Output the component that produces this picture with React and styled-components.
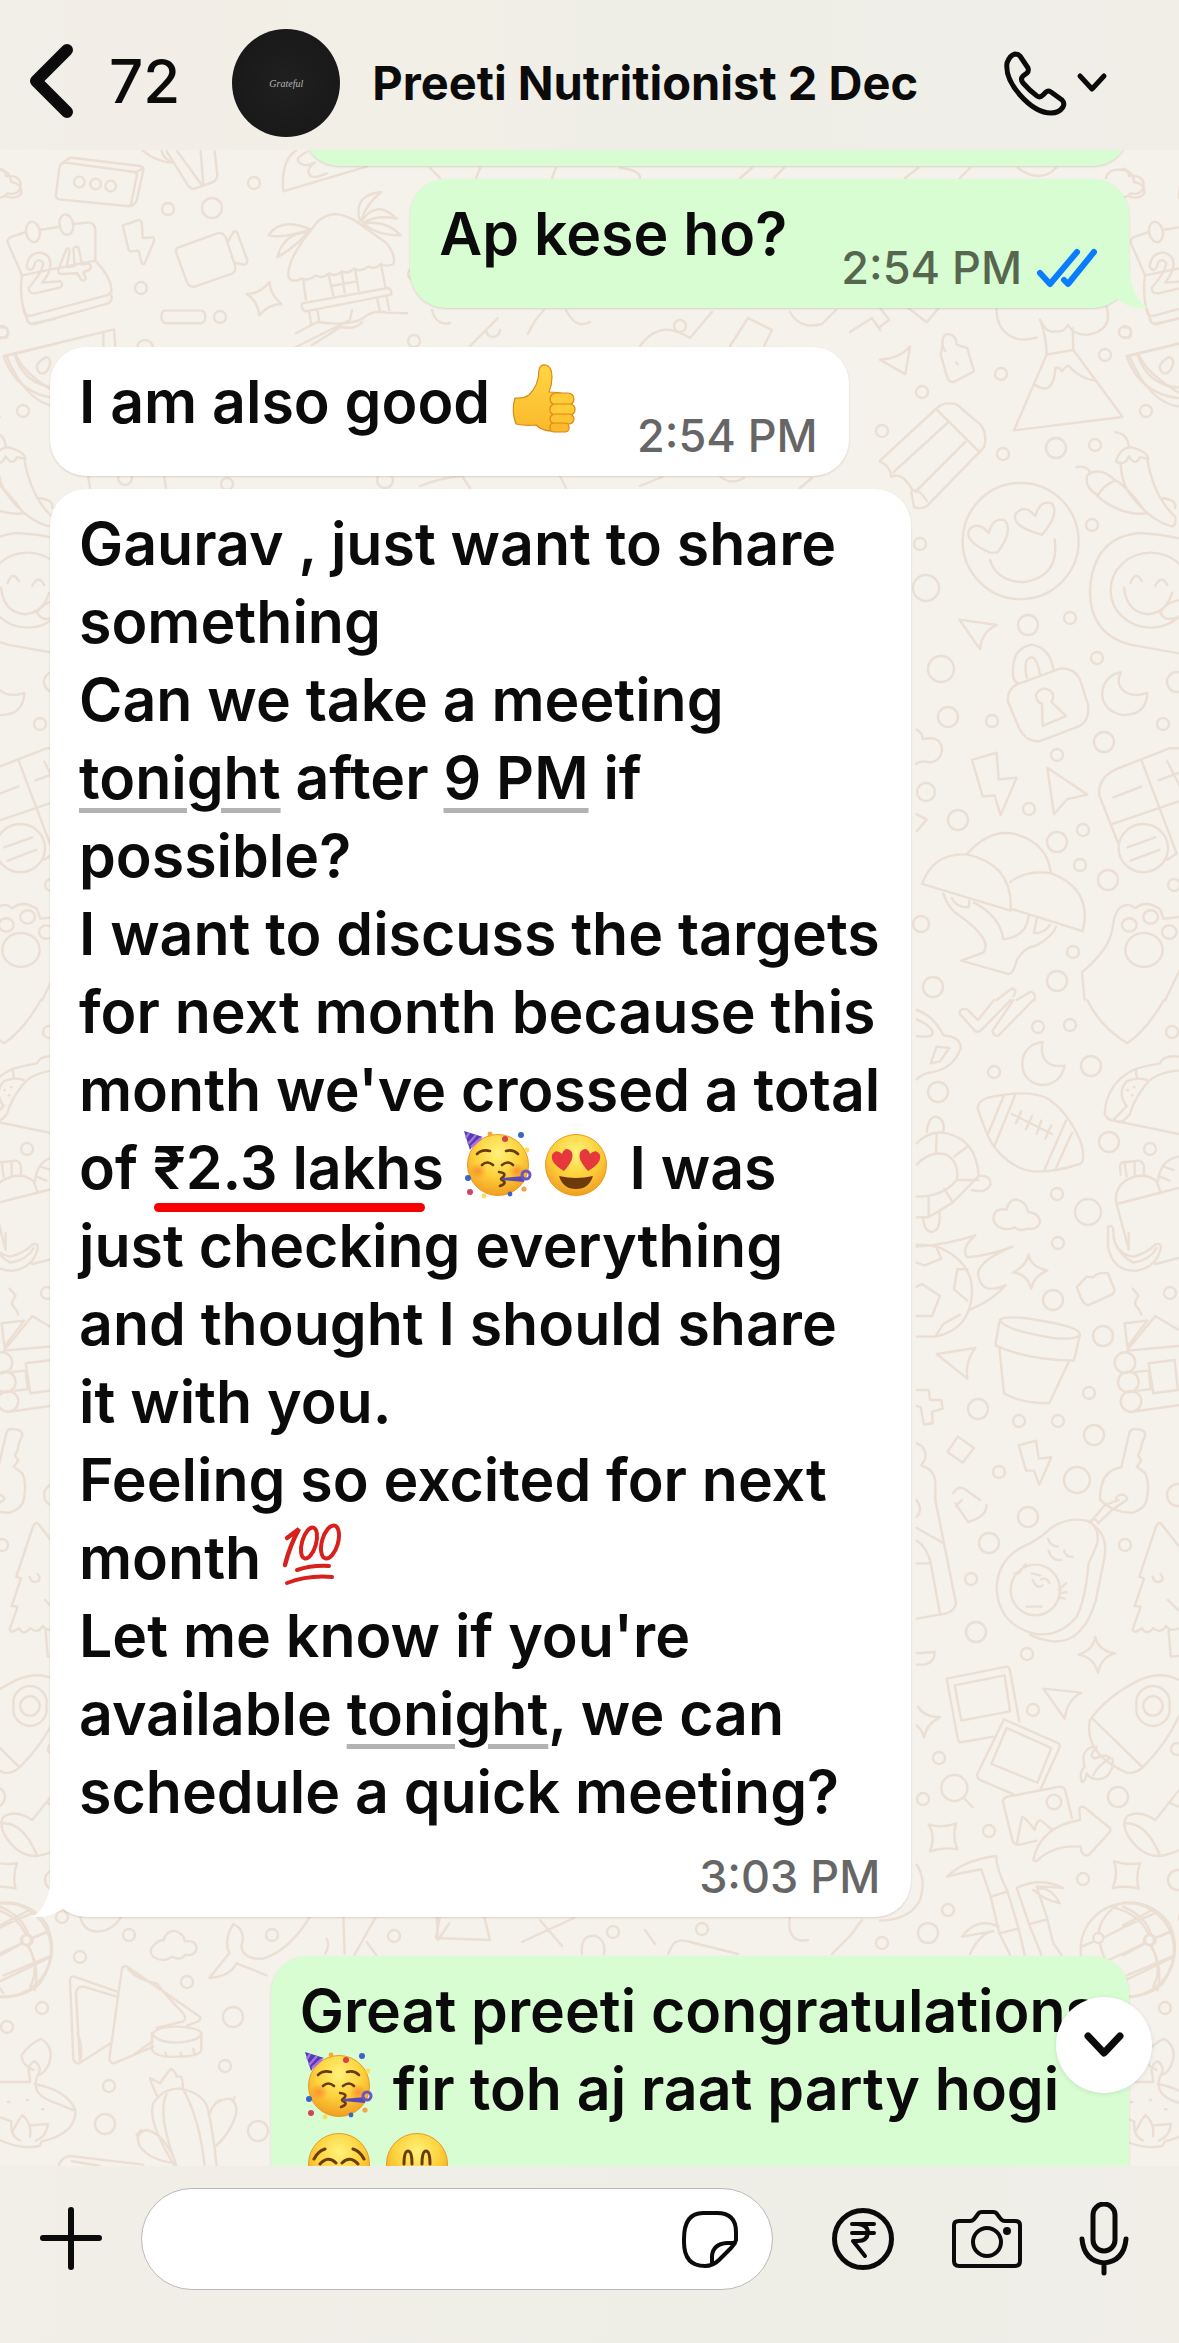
import React from "react";
import styled, { createGlobalStyle, css } from "styled-components";

const GlobalStyle = createGlobalStyle`
  * {
    box-sizing: border-box;
  }
  body {
    margin: 0;
    background: #f5f1eb;
    color: #0b0b0b;
    font-family: Inter, "Liberation Sans", sans-serif;
  }
  button {
    display: flex;
    align-items: center;
    justify-content: center;
    padding: 0;
    border: 0;
    background: none;
    color: inherit;
    font: inherit;
    cursor: pointer;
  }
  svg {
    flex: none;
  }
`;

const Screen = styled.div`
  display: flex;
  flex-direction: column;
  height: 100vh;
`;

const Header = styled.header`
  display: flex;
  align-items: center;
  flex: none;
  height: 150px;
  padding: 16px 70px 0 26px;
  background: linear-gradient(90deg, #f2eee8, #f2efe6 35%, #eeeee7 60%, #f1eee8);
`;

const BackButton = styled.button`
  && {
    gap: 33px;
    padding-bottom: 4px;
    font-size: 60px;
    font-weight: 500;
    line-height: 76px;
  }
`;

const Avatar = styled.div`
  display: flex;
  align-items: center;
  justify-content: center;
  flex: none;
  width: 108px;
  height: 108px;
  margin: 0 32px 0 52px;
  border-radius: 50%;
  background: radial-gradient(#202020, #161616);
  color: #b4b4b4;
  font: italic 10px "Liberation Serif", serif;
`;

const ContactName = styled.h1`
  flex: 1;
  margin: 0;
  font-size: 47px;
  font-weight: 700;
  line-height: 60px;
  white-space: nowrap;
`;

const CallButton = styled.button`
  && {
    gap: 6px;
  }
`;

const Chat = styled.main`
  position: relative;
  flex: 1;
  min-height: 0;
  overflow: hidden;
`;

const WallpaperSvg = styled.svg`
  position: absolute;
  top: 0;
  left: 0;
  width: 1179px;
  height: 2016px;
  fill: none;
  stroke: #ebdfd3;
  stroke-width: 2.4;
  stroke-linecap: round;
  stroke-linejoin: round;

  path,
  rect,
  circle {
    vector-effect: non-scaling-stroke;
  }
`;

const Messages = styled.div`
  position: relative;
  display: flex;
  flex-direction: column;
  margin-top: -60px;
  padding: 0 50px;
`;

const Bubble = styled.article`
  position: relative;
  display: flex;
  align-items: stretch;
  flex-direction: ${(p) => (p.$stacked ? "column" : "row")};
  gap: ${(p) => (p.$stacked ? "18px" : "54px")};
  align-self: ${(p) => (p.$mine ? "flex-end" : "flex-start")};
  margin-top: ${(p) => (p.$first ? "39px" : "13px")};
  padding: 16px 31px 12px 29px;
  border-radius: 36px;
  background: ${(p) => (p.$mine ? "#d8fdd2" : "#ffffff")};
  box-shadow: 0 1px 2px rgba(90, 70, 50, 0.18);
`;

const PreviousBubble = styled(Bubble)`
  width: 826px;
  max-width: 100%;
  height: 76px;
  margin-top: 0;
`;

const Tail = styled.svg`
  position: absolute;
  bottom: 0;
  width: 40px;
  height: 44px;
  ${(p) =>
    p.$mine
      ? css`
          right: -19px;
          fill: #d8fdd2;
        `
      : css`
          left: -18px;
          transform: scaleX(-1);
          fill: #ffffff;
        `}
`;

const Body = styled.div`
  padding-bottom: ${(p) => (p.$stacked ? "0" : "23px")};
  font-size: 59px;
  font-weight: 600;
  line-height: 78px;
  white-space: pre;
`;

const Line = styled.div`
  height: 78px;
`;

const Stamp = styled.div`
  display: flex;
  align-items: center;
  align-self: flex-end;
  gap: 14px;
  color: ${(p) => (p.$mine ? "#56664f" : "#666666")};
  font-size: 45px;
  font-weight: 500;
  line-height: 56px;
  white-space: nowrap;
`;

const DateLink = styled.a`
  color: inherit;
  text-decoration: underline #b3b3b3 5px;
  text-underline-offset: 9px;
`;

const Marked = styled.span`
  position: relative;

  &::after {
    content: "";
    position: absolute;
    left: 1px;
    right: 19px;
    bottom: -9px;
    height: 9px;
    border-radius: 5px;
    background: #f90000;
  }
`;

const EmojiSvg = styled.svg`
  width: 78px;
  height: 72px;
  vertical-align: -12px;
`;

const ScrollButton = styled.button`
  && {
    position: absolute;
    right: 27px;
    bottom: 73px;
    width: 96px;
    height: 96px;
    border-radius: 50%;
    background: #ffffff;
    box-shadow: 0 1px 5px rgba(0, 0, 0, 0.1);
  }
`;

const Composer = styled.footer`
  display: flex;
  align-items: center;
  flex: none;
  height: 177px;
  padding: 0 50px 32px 39px;
  background: linear-gradient(90deg, #f2eee8, #efeee7 45%, #eeeee7 80%, #f1eee8);
`;

const InputWrap = styled.div`
  display: flex;
  align-items: center;
  flex: 1;
  min-width: 0;
  height: 102px;
  margin: 0 58px 0 39px;
  padding: 0 33px 0 40px;
  border: 1px solid #b9b9b9;
  border-radius: 51px;
  background: #ffffff;
`;

const MessageInput = styled.input`
  flex: 1;
  min-width: 0;
  border: 0;
  outline: 0;
  background: none;
  font: 500 46px Inter, sans-serif;
`;

const Actions = styled.div`
  display: flex;
  align-items: center;
  gap: 56px;
`;

function Icon({ width, height, stroke = 5, children, ...rest }) {
  return (
    <svg
      width={width}
      height={height}
      viewBox={`0 0 ${width} ${height}`}
      fill="none"
      stroke="currentColor"
      strokeWidth={stroke}
      strokeLinecap="round"
      strokeLinejoin="round"
      aria-hidden="true"
      {...rest}
    >
      {children}
    </svg>
  );
}

// small rings scattered between the doodles: x, y, radius
const DOTS = [
  [922, 392, 6], [1001, 374, 6], [1125, 332, 6], [1105, 355, 6], [1146, 411, 6],
  [1056, 448, 10], [1095, 445, 6], [1003, 454, 6], [1092, 525, 6], [920, 544, 6],
  [926, 588, 13], [1028, 625, 10], [1070, 618, 6], [941, 669, 13], [948, 717, 10],
  [992, 721, 6], [1097, 658, 6], [1104, 742, 10], [1163, 724, 6], [1177, 682, 10],
  [1057, 755, 6], [1029, 809, 6], [926, 792, 9], [958, 820, 10], [1057, 842, 10],
  [1083, 830, 6], [1080, 865, 6], [1108, 880, 10], [1174, 885, 6], [921, 924, 8],
  [1073, 952, 6], [1057, 981, 10], [933, 987, 10], [882, 431, 6], [1038, 1027, 6],
  [1070, 1025, 6], [1172, 1032, 6], [994, 1072, 6], [1091, 1066, 10], [938, 1092, 10],
  [1109, 1142, 10], [1150, 1149, 6], [1057, 1194, 6], [1088, 1212, 13], [1058, 1243, 6],
  [1053, 1300, 10], [1170, 1293, 6], [1103, 1336, 10], [1089, 1393, 6], [978, 1409, 10],
  [1019, 1421, 6], [1058, 1421, 6], [1094, 1435, 10], [999, 1472, 6], [1077, 1480, 13],
  [1028, 1517, 10], [989, 1543, 10], [1125, 1545, 6], [971, 1579, 6], [976, 1632, 10],
  [1027, 1654, 6], [1033, 1710, 6], [939, 1758, 6], [923, 1799, 6], [989, 1831, 6],
  [1118, 1797, 10], [1083, 1879, 6], [948, 1910, 6], [928, 1933, 10], [882, 1943, 6],
  [1178, 1880, 10], [1177, 1749, 6], [1178, 1495, 11], [62, 1917, 6], [129, 1935, 6],
  [80, 1957, 6], [187, 1982, 6], [272, 1935, 6], [394, 1936, 6], [42, 2008, 6],
  [7, 2027, 6], [233, 2017, 10], [225, 2066, 6], [109, 2086, 6], [105, 2124, 10],
  [258, 2131, 10], [168, 209, 6], [212, 208, 10], [254, 183, 6], [141, 288, 6],
  [220, 317, 6], [414, 274, 6], [414, 341, 6], [145, 348, 8], [125, 478, 7],
  [227, 484, 6], [385, 480, 8], [613, 1932, 6], [702, 1929, 6], [680, 326, 6],
];

// each sheet is a part of the wallpaper drawn on its own grid
const SHEETS = [
  {
    // top left: card, calendar, bolt, camera, beach hut
    at: "translate(0 140) scale(0.3333)",
    paths: [
      "M196 68 L405 96 Q412 98 410 108 L394 190 Q392 200 380 198 L178 178 Q166 176 168 164 L178 84 Q182 68 196 68 Z M182 72 L206 56 Q212 52 222 54 L420 78 Q432 80 430 92 L410 182 Q406 196 386 199 M406 98 L428 86",
      "M222 126 a16 16 0 1 0 32 0 a16 16 0 1 0 -32 0 M271 132 a16 16 0 1 0 32 0 a16 16 0 1 0 -32 0 M316 138 a16 16 0 1 0 32 0 a16 16 0 1 0 -32 0",
      "M0 86 Q18 90 18 108 Q60 104 62 134 Q60 168 22 160 Q14 172 0 172",
      "M428 32 Q470 66 515 68 Q490 54 485 34 M500 34 L560 130 Q570 148 584 146 L640 126 Q652 118 652 104 L644 34 M532 34 L606 136 M602 34 L610 134",
      "M890 30 Q842 60 850 154 L1100 80 M920 36 Q880 56 900 70 Q918 82 944 68 Q914 92 932 108 Q944 116 980 100",
      "M78 276 L36 290 Q20 296 24 310 L66 406 Q58 460 72 516 Q78 532 96 526 L320 466 Q336 462 334 446 Q330 408 286 362 L286 270 Q284 246 262 248 L222 252 M118 270 L182 260 M66 406 L286 362 M76 520 L84 544 Q90 554 104 552 L324 490 Q338 484 334 466",
      "M78 272 a20 30 -10 1 1 42 8 a20 30 -10 1 1 -42 -8 M178 250 a20 30 -10 1 1 42 8 a20 30 -10 1 1 -42 -8",
      "M80 376 Q88 336 124 338 Q158 348 150 384 Q146 404 126 428 L180 424 Q192 432 182 442 L106 460 Q86 462 86 444 Q126 398 130 370 Q122 354 106 366 Q102 386 92 390 Q80 388 80 376 Z",
      "M200 326 Q210 322 208 338 L200 382 L224 378 L220 326 Q226 316 236 324 L246 374 L266 370 Q278 378 268 390 L250 396 L258 416 Q252 424 244 420 L232 400 L182 402 Q172 400 176 386 Z",
      "M368 256 L416 240 Q426 240 426 256 L428 294 L460 292 Q464 294 462 304 L434 370 Q428 376 424 366 L416 332 L392 334 Q386 334 384 322 Z",
      "M536 322 Q524 326 530 342 L560 424 Q566 442 584 440 L694 402 Q708 396 706 380 L678 294 Q670 276 652 280 Z M684 304 L702 274 Q712 272 714 284 L742 360 Q742 374 730 374 L704 368",
      "M740 462 Q780 462 808 426 Q812 466 844 492 Q806 492 778 526 Q774 484 740 462 Z",
      "M494 512 H606 Q616 516 616 530 Q616 546 604 550 H496 Q484 544 484 530 Q484 514 494 512 Z",
      "M866 412 Q860 370 910 300 L950 248 Q976 222 1010 222 Q1048 228 1080 252 L1160 310 Q1190 350 1180 372 Q1160 382 1142 372 Q1126 390 1104 380 Q1082 398 1062 386 Q1044 404 1026 394 Q1004 412 986 400 Q968 418 946 406 Q926 424 906 416 Q876 430 866 412 Z",
      "M806 286 Q840 230 932 268 Q850 296 806 286 Z M924 276 Q850 280 832 352 Q890 318 924 276 M1080 244 Q1058 164 1144 156 Q1100 190 1084 240 M1084 244 Q1130 176 1190 236 Q1130 224 1090 248 M1090 250 Q1160 240 1202 286 Q1130 286 1090 250",
      "M910 420 L918 480 M986 406 L1000 466 M1026 398 L1034 458 M1066 390 L1076 452 M994 438 L1070 424 M1144 378 L1156 440 M906 490 L1164 444 Q1176 448 1174 464 L916 514 Q902 508 906 490 Z M928 516 L934 556 M952 510 L958 544 M1132 476 L1140 516 M1160 470 L1168 510 M888 580 L952 546 Q1050 560 1090 534 Q1120 508 1160 518 L1222 520",
      "M0 592 L18 594 Q26 590 24 572 Q22 560 0 562",
      "M14 648 L342 568 L346 618 M310 576 V618 M20 650 Q80 790 170 800 M48 646 Q70 700 170 760",
    ],
  },
  {
    // right: mountain, eraser, faces, padlock, chillies, mushrooms
    at: "translate(880 300) scale(0.3333 0.4464)",
    paths: [
      "M350 15 C345 70 400 100 470 84 M480 44 Q500 76 526 70 Q550 74 564 56 Q580 78 620 78 Q700 70 680 15 M480 44 Q500 84 500 122 L580 112 L578 64 M500 122 L402 292 L728 262 L580 112 M462 188 Q480 200 500 198 Q524 190 526 152 Q540 150 546 160 Q560 146 566 148 Q600 176 642 180",
      "M80 15 L140 50 L180 15 M0 18 L28 44 L0 60 M0 134 Q60 130 90 104 L76 166 L0 134",
      "M188 98 Q184 78 206 76 Q230 80 230 100 L262 108 L282 160 L220 184 Q206 184 202 174 L182 122 Z M188 98 Q190 112 196 114 M228 140 l6 4",
      "M0 360 L168 244 Q190 226 230 234 L300 278 Q324 300 312 330 L140 462 Q120 470 102 464 L94 430 M168 244 L300 342 M40 386 L204 274 M106 430 L256 318 M0 362 Q30 370 34 396 Q66 384 98 426 Q120 424 140 450",
      "M248 540 a174 130 0 1 0 348 0 a174 130 0 1 0 -348 0 M330 566 Q250 540 268 514 Q294 494 326 522 Q340 484 376 494 Q400 520 352 566 Z M486 526 Q390 506 408 478 Q434 456 466 484 Q480 446 516 456 Q540 480 486 526 M330 582 Q350 630 430 632 Q540 620 524 536",
      "M590 374 Q620 370 632 388 M622 392 Q660 372 706 404 Q668 416 654 438 Q612 420 622 392 Z M650 438 Q720 484 800 478 Q740 416 706 404 M706 296 Q744 300 746 328 M708 362 Q720 330 756 330 Q800 338 806 356 L780 352 Q766 374 746 350 Q736 372 708 362 Z M722 366 Q724 400 740 424 Q800 490 870 506 Q890 510 886 486 Q820 440 802 356 M844 444 Q890 446 886 466",
      "M900 534 Q840 524 780 522 Q640 530 630 650 Q630 760 780 776 L900 792 M692 650 a120 84 0 1 0 240 0 a120 84 0 1 0 -240 0 M732 644 Q740 700 804 704 Q860 700 876 656 M752 634 Q766 604 786 630 M826 640 Q844 614 862 638 M840 700 Q860 676 900 672 M842 702 Q858 724 900 708",
      "M238 716 L350 728 Q306 742 300 782 Z",
      "M400 846 Q390 780 456 772 Q510 780 520 826 M384 900 Q380 864 430 856 L540 826 Q580 822 600 850 L624 906 Q630 940 600 954 L480 988 Q440 992 418 960 Z M440 846 Q428 802 456 800 Q472 804 480 838 M468 886 a26 18 0 1 1 46 14 L558 932 L488 954 L486 904 Q470 902 468 886 Z M400 846 Q404 856 412 858",
      "M722 834 C700 874 750 894 802 880 C800 930 744 930 730 930 C640 920 654 842 722 834 Z",
      "M276 1030 L350 1014 L356 1074 L410 1070 L362 1154 L344 1110 L308 1112 Z M502 1048 L622 1108 L562 1118 L522 1152 Z",
      "M110 962 Q130 972 128 984 Q186 974 186 1010 Q180 1034 150 1036 Q120 1030 108 1040 M110 1152 L140 1164 L110 1190",
      "M658 1110 Q652 1070 712 1050 L870 1004 H900 M658 1110 L714 1216 M784 1030 L890 1240 L862 1254 M696 1174 L900 1122 M700 1114 L784 1090 M716 1228 a74 54 0 1 0 148 0 a74 54 0 1 0 -148 0 M742 1226 L826 1204 M752 1256 L838 1232 M862 1034 L900 1090 M836 1076 L900 1058",
      "M126 1308 Q160 1238 260 1242 Q400 1264 392 1368 Z M262 1240 Q330 1184 404 1196 Q500 1216 512 1280 M390 1304 Q440 1276 512 1284 Q640 1320 608 1414 L394 1364 M190 1330 Q206 1366 240 1380 Q340 1434 310 1462 L244 1480 L386 1510 Q400 1510 410 1480 Q430 1450 470 1446 Q520 1424 528 1404 M216 1340 Q230 1362 266 1360 L268 1346 M282 1350 Q360 1380 370 1432 Q440 1426 446 1380 M470 1386 L462 1418 Q490 1420 510 1400",
      "M606 1506 Q690 1454 698 1406 Q706 1350 752 1356 Q770 1366 770 1360 Q800 1344 840 1364 L850 1386 L900 1382 M726 1400 a22 15 0 1 0 44 0 a22 15 0 1 0 -44 0 M790 1382 a22 15 0 1 0 44 0 a22 15 0 1 0 -44 0 M846 1416 a22 15 0 1 0 44 0 a22 15 0 1 0 -44 0 M736 1456 a56 38 0 1 0 112 0 a56 38 0 1 0 -112 0 M606 1506 L614 1568 M900 1500 L856 1568",
      "M350 1568 L396 1542 Q414 1546 400 1560 M410 1568 L450 1550 Q468 1550 464 1568",
      "M740 126 L896 98 M740 126 Q780 210 896 220 M772 120 Q800 190 896 196 M840 146 Q850 134 868 128 Q880 130 880 142 Q870 168 850 164 Q838 158 840 146 Z M800 18 L812 48 Q820 56 830 52 L896 42",
    ],
  },
  {
    // right: checks, ball, turtle, groceries, bucket, train
    at: "translate(880 1000) scale(0.3333)",
    paths: [
      "M342 0 L294 60 L262 28 Q240 22 238 40 L286 94 Q298 98 306 88 L392 0 M400 0 L338 92 Q338 110 356 106 L460 0",
      "M622 0 Q660 80 742 130 Q800 90 852 0",
      "M110 30 Q160 46 190 106 Q244 110 242 146 Q220 204 160 216 Q130 218 110 238 M110 58 Q160 80 158 102 Q150 114 110 108 M170 140 L208 144 L180 184 L152 190 Z",
      "M488 126 C420 134 410 210 450 242 C500 274 548 240 554 196 C490 208 480 160 488 126 Z",
      "M294 330 Q290 306 320 294 Q440 266 500 294 Q560 330 600 420 Q620 480 600 492 Q480 530 420 504 Q350 470 320 400 Z M372 286 L324 402 M406 284 L344 436 M558 362 L494 508 M576 398 L528 504 M396 342 L516 402 M424 334 L408 370 M456 348 L438 388 M484 362 L470 402 M514 376 L496 416",
      "M896 170 Q850 164 840 190 Q780 200 760 210 Q680 250 674 340 Q680 360 702 362 L896 402 M896 212 Q820 216 790 264 Q762 300 750 342 Q720 380 702 358 L740 318 Q710 280 740 244 Q770 230 800 240 M768 208 L770 234 M742 270 h2 M756 286 h2 M762 262 h2",
      "M140 396 Q146 350 168 350 Q196 356 190 396 M110 430 Q150 388 200 400 Q290 420 296 528 L218 608 L146 652 L110 652 M110 494 Q150 450 200 464 Q240 490 230 540 Q190 590 110 590 M170 400 L168 460 M262 440 L222 470 M230 540 L296 540 M192 566 L218 606 M146 592 V652 M296 528 Q330 524 332 552 Q320 582 276 570 M130 656 Q130 690 154 696 Q184 692 178 638",
      "M354 680 Q330 660 348 634 Q366 624 380 630 Q384 600 410 598 Q440 606 444 636 Q480 640 480 668 Q470 692 440 686 Q420 696 404 682 Q380 694 354 680 Z",
      "M110 740 Q200 734 286 706 Q240 746 262 772 Q320 768 398 740 Q300 780 294 820 Q300 870 340 866 Q360 864 376 856 Q340 900 272 928 M110 734 Q150 734 182 744 Q280 790 276 880 Q270 990 166 1010 H110 M170 744 L184 776 L134 796 L110 788 M110 860 L126 852 L180 888 L156 948 H110 M232 808 H262 M232 808 L222 868 L262 902 M166 1010 L190 972 L240 944",
      "M446 762 Q450 800 502 812 Q462 826 454 866 Q440 820 398 818 Q440 798 446 762 Z",
      "M590 862 L620 830 L640 832 Q650 816 684 820 L704 870 Q702 884 690 886 L624 916 Q610 912 602 892 Z",
      "M722 524 L720 498 Q720 484 740 486 L776 482 Q788 484 792 500 L792 524 M740 530 L734 488 M764 526 L764 484 M736 542 Q700 570 710 612 L746 748 M736 542 Q790 512 830 544 L842 578 M710 612 L896 564 M834 544 Q840 480 896 470 M850 500 L880 510 M840 530 L868 542",
      "M684 680 Q700 672 700 692 Q700 760 760 770 Q800 760 826 734 Q844 726 842 746 Q830 800 770 812 Q700 816 684 740 Z M700 710 Q710 760 760 788 Q810 780 830 744 M826 792 L896 774 M746 700 V748",
      "M758 866 Q774 884 776 888 Q760 908 768 918 Q780 930 784 944 M734 970 L802 962 L742 1040 Z M742 1052 L896 1038 M742 1050 L826 948 L896 990 M704 1088 a31 31 0 1 0 62 0 a31 31 0 1 0 -62 0 M714 1146 a31 31 0 1 0 62 0 a31 31 0 1 0 -62 0 M722 1204 a31 31 0 1 0 62 0 a31 31 0 1 0 -62 0 M766 1116 L806 1112 L812 1168 L774 1172 M806 1090 L884 1080 L894 1170 L820 1180 Z M750 1236 L896 1216",
      "M360 960 Q370 944 470 960 Q600 980 600 1004 Q590 1020 520 1014 Q370 990 360 960 Z M358 966 L346 1036 Q440 1080 582 1082 L600 1004 M358 1042 L372 1180 Q420 1210 508 1210 L566 1086",
      "M170 1062 L286 1044 Q254 1086 262 1136 Z M110 1170 L146 1170 L150 1200 L184 1200 L188 1226 L156 1236 L158 1270 L132 1274 L122 1222 L110 1218",
      "M234 1310 L282 1344 L248 1388 L202 1356 Z M416 1336 L468 1322 L476 1376 L514 1372 L478 1454 L462 1412 L438 1412 Z",
      "M748 1300 Q752 1284 770 1288 Q796 1288 796 1306 L786 1330 L782 1350 L774 1366 L784 1382 L770 1400 L796 1420 Q810 1450 800 1500 M748 1300 L724 1402 Q660 1410 660 1500 M708 1496 a18 18 0 0 1 34 0",
      "M110 1330 Q140 1340 136 1376 L124 1396 Q166 1410 166 1450 L166 1500 M220 1480 Q236 1452 258 1470 L300 1500",
    ],
  },
  {
    // right: avocado, tree, photos, rocket, bamboo, beach ball
    at: "translate(880 1500) scale(0.3333)",
    paths: [
      "M110 0 Q130 30 110 50 M166 0 L228 310 Q226 330 200 340 L110 356 M110 84 L188 128 M110 122 Q140 140 152 188 L180 342 M110 190 H150",
      "M226 10 L264 66 Q320 50 320 14 M228 18 L246 0",
      "M350 270 Q350 170 450 130 Q490 108 510 86 Q560 50 620 62 Q660 76 652 130 Q640 160 626 190 Q616 300 590 350 Q540 410 470 402 Q360 380 350 270 Z M640 76 Q690 110 670 190 L648 300 Q610 430 520 424 Q480 420 450 404 M392 270 a74 76 0 1 0 148 0 a74 76 0 1 0 -148 0 M504 116 Q510 138 534 140 M506 152 Q516 184 544 180 M552 152 Q560 174 578 170 M404 220 Q420 224 430 200 L438 192 M456 220 L480 226 M458 240 Q470 270 488 256 M484 238 Q498 230 508 248 M440 320 H484 M536 270 L558 250 M540 280 L560 276 M536 292 L554 296",
      "M630 64 Q640 50 654 66 M634 64 L674 16 L716 0 M654 70 L696 30 L740 0 M662 0 Q700 40 760 38 Q796 24 800 0",
      "M896 138 L846 74 Q836 62 828 80 L778 230 L792 236 L764 318 L782 320 L758 388 Q762 404 786 384 Q800 410 820 384 Q840 404 858 378 Q870 396 896 386 M818 230 Q824 254 846 242 Q850 230 842 222 M864 300 L896 332 M866 392 L872 470 L896 468",
      "M646 410 Q654 452 706 460 Q664 470 654 518 Q640 470 596 464 Q640 450 646 410 Z",
      "M110 460 L164 456 Q164 490 130 494 H110 M114 620 Q130 650 180 652 Q140 670 132 712 Q126 690 110 676",
      "M200 536 L380 500 Q388 500 390 512 L418 664 M200 536 L234 720 Q238 730 248 726 L340 710 M224 556 L374 526 L390 634 L244 662 Z",
      "M372 658 L536 730 Q542 736 538 744 L482 868 M372 658 L292 822 Q290 834 300 840 L408 886 M380 684 L514 744 L472 848 L334 792 Z",
      "M490 566 L604 578 Q562 600 554 656 Z",
      "M370 910 Q366 896 382 890 L540 860 Q552 860 556 872 L576 954 M370 910 L398 1024 Q404 1034 420 1034 L470 1022 M500 906 a22 22 0 1 0 44 0 a22 22 0 1 0 -44 0 M410 1034 L426 950 Q436 952 464 990 Q470 958 484 962 L516 990",
      "M460 1080 Q480 980 600 960 L598 926 Q604 916 616 924 L690 984 Q694 994 686 1000 L626 1066 Q604 1070 602 1040 Q520 1034 472 1082 Q464 1086 460 1080 Z",
      "M184 864 a39 39 0 1 0 78 0 a39 39 0 1 0 -78 0 M250 892 L278 922 M146 974 Q190 986 228 970 Q216 1010 232 1048 Q190 1040 150 1054 Q168 1010 146 974 Z M702 1084 Q740 1096 780 1090 Q766 1130 776 1166 Q740 1156 698 1164 Q716 1120 702 1084 Z",
      "M896 540 Q840 510 770 544 Q680 590 630 660 Q610 760 740 818 Q770 822 790 800 Q860 730 896 650 M640 658 L788 802 M770 618 a50 50 0 1 0 98 0 a50 50 0 1 0 -98 0 M790 618 a29 29 0 1 0 58 0 a29 29 0 1 0 -58 0 M640 740 Q600 750 614 800 Q596 820 606 846 Q616 846 620 820 Q640 850 680 830 Q706 800 696 776 M650 740 Q624 770 644 776 Q680 760 690 774 Q650 800 640 826",
      "M896 872 L826 960 Q780 930 746 946 Q724 960 740 1000 Q780 1070 840 1068 Q880 1060 896 1050 M740 970 Q800 970 840 1066 M866 908 L896 920",
      "M110 1094 Q140 1140 120 1200 Q90 1260 0 1262",
      "M202 1130 Q250 1080 348 1068 Q350 1110 382 1172 L416 1286 L434 1364 M202 1130 Q240 1120 304 1108 L332 1190 L358 1300 L390 1364 M332 1190 L380 1176 M358 1300 L416 1286 M410 1164 Q480 1130 550 1164 Q500 1160 470 1160 L500 1250 L520 1330 L544 1364 M410 1164 L450 1280 L484 1364 M450 1272 L502 1258 M460 1170 Q490 1200 540 1210 Q510 1160 480 1166 M246 1310 Q290 1250 356 1280 M246 1310 L340 1294 Q300 1300 270 1362",
      "M602 1350 a140 140 0 1 0 280 0 a140 140 0 1 0 -280 0 M656 1300 Q660 1250 716 1212 M640 1314 a15 15 0 1 0 30 0 a15 15 0 1 0 -30 0 M792 1320 a15 15 0 1 0 30 0 a15 15 0 1 0 -30 0 M670 1314 Q730 1280 824 1240 M690 1220 Q780 1240 806 1304 M604 1340 L642 1324 M670 1388 L794 1330 M822 1316 L868 1296 M660 1330 Q670 1390 740 1480 M812 1336 Q850 1400 820 1460 M740 1426 L876 1370",
    ],
  },
  {
    // bottom left: whale, sandwich, cactus, lamp
    at: "translate(0 1900) scale(0.3333)",
    paths: [
      "M240 46 Q250 100 300 94 Q340 90 364 50",
      "M460 170 Q440 150 470 128 Q480 118 490 122 Q500 88 530 94 Q554 106 554 124 Q590 120 590 146 Q584 170 556 164 Q540 184 516 170 Q490 190 460 170 Z",
      "M700 72 Q740 90 724 140 Q730 180 790 176 Q870 150 930 50 M700 72 Q670 120 688 160 L628 234 Q690 230 710 190 L800 226 M980 116 Q990 140 976 160 M1030 50 L1034 160 M1128 50 L1064 164 M1100 126 L1128 164 M1310 50 L1314 120 L1348 70",
      "M354 276 L222 230 Q210 228 210 242 L220 478 Q226 492 238 490 L332 430 M240 488 L228 280 Q230 258 250 260 L350 290 M240 488 Q250 440 232 400 M366 206 Q370 196 382 200 L600 350 Q604 360 590 366 L560 378 M366 206 L328 476 Q330 490 342 490 L460 440 M384 206 Q410 240 470 250 Q500 290 550 340 Q560 356 550 364 L470 384 M396 468 L458 424",
      "M456 400 Q480 378 530 380 Q600 384 604 400 Q600 424 530 428 Q470 426 456 400 Z M456 400 V450 Q470 474 530 470 Q600 470 604 450 V400 M500 470 L496 458 M544 470 L542 458 M584 462 L580 446",
      "M470 586 Q450 540 450 534 L480 550 Q500 520 514 506 Q530 520 530 530 L544 530 Q550 550 548 566 M524 798 Q440 660 460 610 Q490 564 540 566 Q620 580 626 640 Q640 700 650 798 M500 582 Q470 640 530 798 M550 568 Q600 660 614 798 M630 640 Q640 600 690 596 Q716 610 706 650 Q690 700 646 740 M524 780 Q490 700 440 690 Q400 700 420 740 Q450 780 524 790 M648 608 L660 600 M700 604 L704 590 M410 704 L424 690",
      "M100 510 Q60 490 66 464 Q90 430 124 416 Q160 440 150 480 Q140 520 112 526 M86 510 Q90 486 104 484 Q126 500 116 520 Q104 540 108 560 Q110 590 170 610 Q220 630 226 632 M86 512 Q90 530 90 546 L0 546 M104 552 Q200 570 226 630 Q230 700 126 724 L118 738 Q60 750 0 720 M40 690 Q60 650 68 646 Q96 670 90 710 M94 676 L144 672 Q140 710 108 722 M0 652 L34 664 Q30 710 60 722 M24 606 h4 M80 600 h4 M126 628 h4",
      "M176 796 Q186 770 210 768 L430 794 M216 784 L300 798",
      "M0 8 Q90 0 140 74 Q180 160 120 250 Q80 290 0 292 M66 120 a16 16 0 1 0 32 0 a16 16 0 1 0 -32 0 M0 20 Q70 50 84 104 M0 166 L66 130 M98 114 L144 96 M0 76 L88 30 M84 136 Q120 200 104 270 M0 244 L154 170",
    ],
  },
  {
    // strips between the bubbles
    at: "translate(0 0)",
    paths: [
      "M296 347 L320 335 L350 320 L352 310 M312 345 Q330 334 340 327 Q356 330 362 322 M432 310 Q436 326 450 323 M470 346 L498 318 M486 330 a6 6 0 1 0 14 0 M528 334 Q534 320 544 310 M566 310 Q576 330 590 322 M640 346 Q660 318 690 338 L712 312 M730 346 L748 318 L772 330 L764 346 M790 312 Q800 330 822 324 L836 310 M850 332 L872 318 L880 330",
      "M430 168 L440 178 M480 168 L476 178 M556 168 L552 178 M620 168 Q640 170 640 178 M740 178 L752 168 M774 178 L784 168 M905 178 L918 168 M960 178 L970 168 M1018 168 Q1040 184 1056 168 M1106 178 Q1108 168 1124 170 Q1134 172 1134 182 Q1146 184 1144 194 Q1138 200 1128 196",
      "M88 475 L90 488 M164 475 L166 488 M420 486 Q440 478 462 476 L470 488 M560 476 L566 488 M640 486 L662 477 M720 476 Q730 486 744 478 M800 488 L812 478",
      "M440 1916 L436 1938 L490 1940 L484 1916 M522 1942 L574 1918 M540 1920 L562 1946 M582 1954 Q580 1934 596 1936 Q606 1940 604 1954 M645 1930 L655 1944 M668 1954 L672 1946 Q676 1938 690 1942 L738 1954 M790 1916 Q786 1944 808 1940 M832 1954 L850 1936 L862 1920",
    ],
  },
];

function Wallpaper() {
  return (
    <WallpaperSvg viewBox="0 150 1179 2016" aria-hidden="true">
      <defs>
        <g id="doodles">
          {SHEETS.map((sheet) => (
            <g key={sheet.at} transform={sheet.at}>
              {sheet.paths.map((d) => (
                <path key={d} d={d} />
              ))}
            </g>
          ))}
          {DOTS.map(([x, y, r]) => (
            <circle key={`${x}-${y}`} cx={x} cy={y} r={r} />
          ))}
        </g>
      </defs>
      <use href="#doodles" />
      <use href="#doodles" x="-1123" />
      <use href="#doodles" x="1123" />
    </WallpaperSvg>
  );
}

const HiddenSvg = styled.svg`
  position: absolute;
`;

function EmojiDefs() {
  return (
    <HiddenSvg width="0" height="0" aria-hidden="true">
      <defs>
        <radialGradient id="face" cx="0.5" cy="0.3" r="0.75">
          <stop offset="0" stopColor="#fff27a" />
          <stop offset="0.5" stopColor="#fdd23c" />
          <stop offset="1" stopColor="#f0961c" />
        </radialGradient>
        <radialGradient id="blush">
          <stop offset="0" stopColor="#f8702c" stopOpacity="0.6" />
          <stop offset="1" stopColor="#f8702c" stopOpacity="0" />
        </radialGradient>
        <linearGradient id="hand" x1="0" y1="0" x2="0" y2="1">
          <stop offset="0" stopColor="#ffd543" />
          <stop offset="1" stopColor="#fbb92b" />
        </linearGradient>
      </defs>
    </HiddenSvg>
  );
}

function Face() {
  return <circle cx="39" cy="36" r="30.5" fill="url(#face)" stroke="#e99a25" strokeWidth="1" />;
}

const EMOJI = {
  party: {
    label: "🥳",
    art: (
      <>
        <Face />
        <ellipse cx="19" cy="42" rx="9" ry="8" fill="url(#blush)" />
        <ellipse cx="58" cy="42" rx="9" ry="8" fill="url(#blush)" />
        <path d="M5 2 L24 8 Q17 10 11 21 Z" fill="#4a3fb4" />
        <path d="M10 4 L7 9 M17 6 L9 15 M22 9 L12 18" stroke="#b66be0" strokeWidth="2.4" />
        <g fill="none" stroke="#6b3b0c" strokeWidth="2.6" strokeLinecap="round">
          <path d="M18 25 Q23 20 31 22 M47 22 Q54 20 59 25" />
          <path d="M23 36 Q28 31 34 36 M43 36 Q49 31 54 36" />
          <path d="M40 43 Q49 44 43 49 Q41 50 43 51 Q49 54 41 57" />
        </g>
        <path d="M43 50 L64 48 V52 Z" fill="#5a49b5" stroke="#5a49b5" strokeWidth="2" />
        <circle cx="67" cy="46" r="4" fill="none" stroke="#6b55c0" strokeWidth="3" />
        <circle cx="46" cy="10" r="3" fill="#d8404b" />
        <circle cx="62" cy="6" r="3" fill="#3a63c4" />
        <circle cx="9" cy="49" r="3" fill="#3a63c4" />
        <circle cx="51" cy="65" r="2.4" fill="#3a63c4" />
        <circle cx="11" cy="63" r="3" fill="#d0445c" />
        <circle cx="65" cy="60" r="2.6" fill="#f0a64a" />
        <circle cx="31" cy="5" r="2.4" fill="#f3a734" />
        <circle cx="68" cy="21" r="2.4" fill="#f9dc5c" />
        <circle cx="25" cy="67" r="2.4" fill="#f9dc5c" />
      </>
    ),
  },
  love: {
    label: "😍",
    art: (
      <>
        <Face />
        <path d="M27 42 Q13 34 15 26 Q19 19 25 25 Q28 17 34 22 Q39 29 27 42 Z" fill="#e8373c" />
        <path d="M51 42 Q39 29 44 22 Q50 17 53 25 Q59 19 63 26 Q65 34 51 42 Z" fill="#e8373c" />
        <path d="M22 47 Q39 51 56 47 Q52 60 39 60 Q26 60 22 47 Z" fill="#6d3a0c" />
      </>
    ),
  },
  thumb: {
    label: "👍",
    art: (
      <g stroke="#d98a17" strokeWidth="1.2" strokeLinejoin="round">
        <path
          d="M10 35 Q18 36 24 32 Q34 22 34 7 Q35 1 41 2 Q47 4 47 14 Q47 22 44 29 Q58 29 62 33 L64 58 Q62 68 52 68 Q38 69 31 62 Q20 63 11 61 Q6 48 10 35 Z"
          fill="url(#hand)"
        />
        <rect x="45" y="30" width="24" height="12" rx="6" fill="#ffcb37" />
        <rect x="45" y="41" width="25" height="11" rx="5" fill="#ffcb37" />
        <rect x="45" y="51" width="24" height="10" rx="5" fill="#fdc330" />
        <rect x="45" y="60" width="19" height="9" rx="4" fill="#fbb92b" />
      </g>
    ),
  },
  hundred: {
    label: "💯",
    art: (
      <g fill="none" stroke="#d8201c" strokeLinecap="round">
        <path d="M11 19 L23 10 Q14 26 9 46" strokeWidth="4.5" />
        <ellipse cx="33" cy="24" rx="7" ry="16" strokeWidth="4" transform="rotate(16 33 24)" />
        <ellipse cx="54" cy="23" rx="8" ry="17" strokeWidth="4" transform="rotate(16 54 23)" />
        <path d="M21 51 Q36 46 53 47 M11 64 Q32 56 56 58" strokeWidth="4" />
      </g>
    ),
  },
  joy: {
    label: "😂",
    art: (
      <>
        <Face />
        <path
          d="M14 31 Q18 23 25 21 M53 21 Q60 23 64 31 M20 36 Q28 27 36 35 M42 35 Q50 27 58 36"
          fill="none"
          stroke="#6b3b0c"
          strokeWidth="3"
          strokeLinecap="round"
        />
      </>
    ),
  },
  smile: {
    label: "😁",
    art: (
      <>
        <Face />
        <path
          d="M26 36 Q26 23 30 23 Q34 23 34 36 M44 36 Q44 23 48 23 Q52 23 52 36"
          fill="none"
          stroke="#6b3b0c"
          strokeWidth="3"
          strokeLinecap="round"
        />
      </>
    ),
  },
};

function Emoji({ name }) {
  const { label, art } = EMOJI[name];
  return (
    <EmojiSvg viewBox="0 0 78 72" role="img" aria-label={label}>
      {art}
    </EmojiSvg>
  );
}

function Message({ mine, stacked, first, tail, time, read, lines }) {
  return (
    <Bubble $mine={mine} $stacked={stacked} $first={first}>
      {tail && (
        <Tail $mine={mine} viewBox="0 0 40 44" aria-hidden="true">
          <path d="M21 0 Q22 34 40 44 Q22 45 10 36 L0 30 Z" />
        </Tail>
      )}
      <Body $stacked={stacked}>
        {lines.map((line, i) => (
          <Line key={i}>{line}</Line>
        ))}
      </Body>
      {time && (
        <Stamp $mine={mine}>
          <time>{time}</time>
          {read && (
            <Icon width={62} height={42} stroke={6} color="#0a7cff">
              <path d="M4 26 L14 37 L41 5 M28 33 L32 37 L58 5" />
            </Icon>
          )}
        </Stamp>
      )}
    </Bubble>
  );
}

const MEETING_LINES = [
  "Gaurav , just want to share",
  "something",
  "Can we take a meeting",
  <>
    <DateLink href="#tonight">tonight</DateLink> after <DateLink href="#nine-pm">9 PM</DateLink> if
  </>,
  "possible?",
  "I want to discuss the targets",
  "for next month because this",
  "month we've crossed a total",
  <>
    of <Marked>₹2.3 lakhs</Marked> <Emoji name="party" />
    <Emoji name="love" /> I was
  </>,
  "just checking everything",
  "and thought I should share",
  "it with you.",
  "Feeling so excited for next",
  <>
    month <Emoji name="hundred" />
  </>,
  "Let me know if you're",
  <>
    available <DateLink href="#tonight">tonight</DateLink>, we can
  </>,
  "schedule a quick meeting?",
];

const REPLY_LINES = [
  "Great preeti congratulations",
  <>
    <Emoji name="party" /> fir toh aj raat party hogi
  </>,
  <>
    <Emoji name="joy" />
    <Emoji name="smile" />
  </>,
];

export default function App() {
  return (
    <Screen>
      <GlobalStyle />
      <EmojiDefs />
      <Header>
        <BackButton aria-label="Back, 72 unread chats">
          <Icon width={50} height={80} stroke={12}>
            <path d="M41 9 L10 40 L41 71" />
          </Icon>
          72
        </BackButton>
        <Avatar>Grateful</Avatar>
        <ContactName>Preeti Nutritionist 2 Dec</ContactName>
        <CallButton aria-label="Call">
          <Icon width={68} height={66}>
            <path d="M6 13 Q9 5 14 4 Q17 4 19 6 L27 18 Q28 21 26 23 L22 26 Q19 29 22 33 Q29 41 36 46 Q39 48 42 45 L45 42 Q47 40 50 42 L61 50 Q64 53 62 57 Q58 63 50 63 Q35 63 19 45 Q4 28 6 13 Z" />
          </Icon>
          <Icon width={34} height={22}>
            <path d="M5 4 L17 17 L29 4" />
          </Icon>
        </CallButton>
      </Header>

      <Chat>
        <Wallpaper />
        <Messages>
          <PreviousBubble $mine />
          <Message mine tail time="2:54 PM" read lines={["Ap kese ho?"]} />
          <Message
            first
            time="2:54 PM"
            lines={[
              <>
                I am also good <Emoji name="thumb" />
              </>,
            ]}
          />
          <Message stacked tail time="3:03 PM" lines={MEETING_LINES} />
          <Message mine stacked first lines={REPLY_LINES} />
        </Messages>
        <ScrollButton aria-label="Scroll to latest message">
          <Icon width={46} height={30} stroke={7}>
            <path d="M7 6 L23 23 L39 6" />
          </Icon>
        </ScrollButton>
      </Chat>

      <Composer>
        <button aria-label="Attach">
          <Icon width={63} height={63} stroke={6}>
            <path d="M32 3 V60 M4 31 H60" />
          </Icon>
        </button>
        <InputWrap>
          <MessageInput type="text" aria-label="Message" />
          <button aria-label="Stickers">
            <Icon width={58} height={58} stroke={4}>
              <path d="M3 29 Q3 3 22 3 H36 Q55 3 55 22 V30 Q54 34 50 38 L38 50 Q32 56 24 56 Q3 56 3 32 Z M54 33 H46 Q32 34 31 46 V54" />
            </Icon>
          </button>
        </InputWrap>
        <Actions>
          <button aria-label="Payment">
            <Icon width={64} height={64}>
              <circle cx="32" cy="32" r="28.5" />
              <path d="M21 17 H43 M21 26 H43 M22 17 H27 Q37 18 37 26 Q36 34 27 34 H22 L34 49" strokeWidth="4" />
            </Icon>
          </button>
          <button aria-label="Camera">
            <Icon width={72} height={60} stroke={4}>
              <path d="M8 12 H19 Q22 12 24 9 L27 5 Q28 3 31 3 H42 Q45 3 46 5 L49 9 Q51 12 54 12 H64 Q69 12 69 16 V52 Q69 57 64 57 H8 Q3 57 3 52 V16 Q3 12 8 12 Z" />
              <circle cx="36" cy="33" r="14" />
              <circle cx="56" cy="22" r="2" fill="currentColor" />
            </Icon>
          </button>
          <button aria-label="Voice message">
            <Icon width={50} height={74}>
              <rect x="14" y="2" width="22" height="47" rx="11" />
              <path d="M3 37 Q5 59 25 61 Q45 59 47 37 M25 61 V71" />
            </Icon>
          </button>
        </Actions>
      </Composer>
    </Screen>
  );
}
